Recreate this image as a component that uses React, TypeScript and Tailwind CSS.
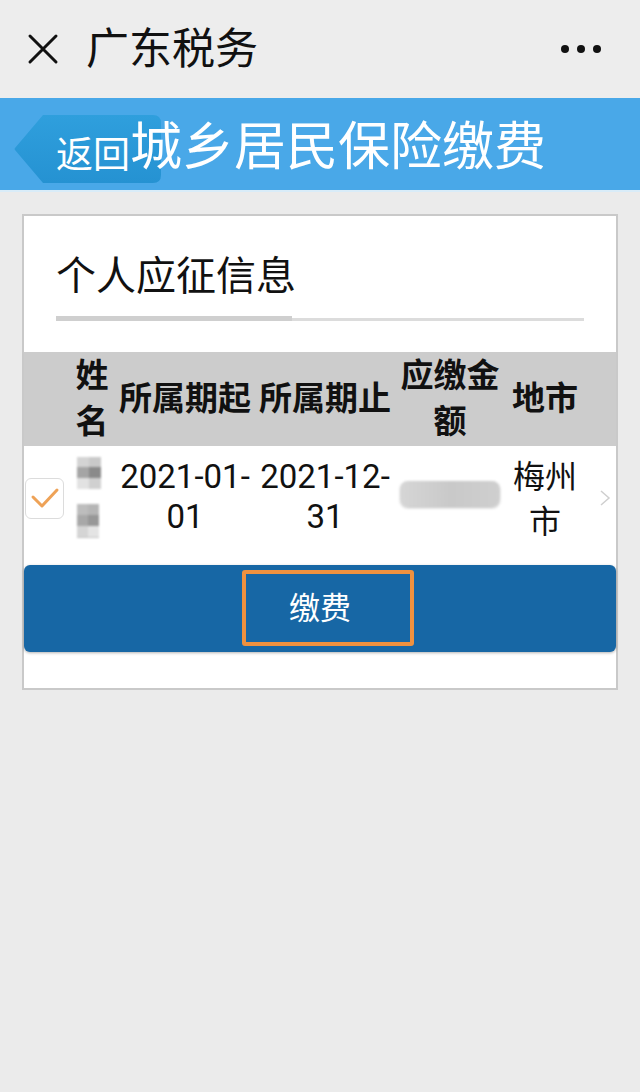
import React from 'react';

const FONT = 'font-["Roboto","Noto_Sans_CJK_SC",sans-serif]';

function CloseIcon() {
  return (
    <svg width="32" height="32" viewBox="0 0 32 32" className="text-[#111]">
      <path d="M3 3 L29 29 M29 3 L3 29" stroke="currentColor" strokeWidth="3" strokeLinecap="round" />
    </svg>
  );
}

function BackShape() {
  return (
    <svg
      width="150"
      height="70"
      viewBox="0 0 150 70"
      className="absolute left-[13px] top-[16px]"
    >
      <defs>
        <linearGradient id="backg" x1="0" y1="0" x2="0" y2="1">
          <stop offset="0" stopColor="#2f9fdd" />
          <stop offset="1" stopColor="#2592d2" />
        </linearGradient>
      </defs>
      <path
        d="M30 1 H140 Q148 1 148 9 V61 Q148 69 140 69 H30 L2 36 Q1 35 2 34 Z"
        fill="url(#backg)"
      />
    </svg>
  );
}

function CheckBox() {
  return (
    <div className="w-[39px] h-[41px] rounded-[6px] border-[1.5px] border-[#dcdcdc] bg-white flex items-center justify-center">
      <svg width="30" height="24" viewBox="0 0 30 24">
        <path
          d="M3 11 L12 20 L27 4"
          fill="none"
          stroke="#eea257"
          strokeWidth="3"
          strokeLinecap="round"
          strokeLinejoin="round"
        />
      </svg>
    </div>
  );
}

// mosaic blur over the name
function BlurredName() {
  return (
    <div className="flex flex-col gap-[15px] items-start">
      <div className="w-[24px] h-[32px] bg-[#dadada] blur-[1px] grid grid-cols-2 grid-rows-3">
        <div className="bg-[#d4d4d4]" />
        <div className="bg-[#c9c9c9]" />
        <div className="bg-[#a5a5a5]" />
        <div className="bg-[#8a8a8a]" />
        <div className="bg-[#e2e2e2]" />
        <div className="bg-[#d0d0d0]" />
      </div>
      <div className="w-[22px] h-[34px] bg-[#c4c4c4] blur-[1px] grid grid-cols-2 grid-rows-3">
        <div className="bg-[#bdbdbd]" />
        <div className="bg-[#b5b5b5]" />
        <div className="bg-[#a8a8a8]" />
        <div className="bg-[#979797]" />
        <div className="bg-[#d5d5d5]" />
        <div className="bg-[#e4e4e4]" />
      </div>
    </div>
  );
}

export default function App() {
  return (
    <div className={`min-h-[1092px] bg-[#ebebeb] ${FONT}`}>
      {/* top bar */}
      <div className="h-[98px] bg-[#ededed] flex items-center pl-[27px] pr-[39px]">
        <CloseIcon />
        <div className="ml-[27px] text-[43px] leading-[48px] text-[#111]">广东税务</div>
        <div className="ml-auto flex gap-[8px]">
          <span className="w-[8px] h-[8px] rounded-full bg-[#111]" />
          <span className="w-[8px] h-[8px] rounded-full bg-[#111]" />
          <span className="w-[8px] h-[8px] rounded-full bg-[#111]" />
        </div>
      </div>

      {/* blue title bar */}
      <div className="relative h-[94px] bg-[#49a8e8] border-b-[2px] border-[#d9ecf8] flex items-center pl-[56px] pt-[8px] text-white">
        <BackShape />
        <span className="relative mt-[16px] text-[37px] leading-[40px]">返回</span>
        <span className="relative text-[52px] leading-[56px]">城乡居民保险缴费</span>
      </div>

      {/* card */}
      <div className="mx-[22px] mt-[22px] border-2 border-[#c9c9c9] bg-white pb-[36px]">
        <div className="px-[32px] pt-[41px]">
          <div className="text-[40px] leading-[40px] text-[#111]">个人应征信息</div>
          <div className="mt-[19px] flex items-end">
            <div className="w-[236px] h-[5px] bg-[#cfcfcf]" />
            <div className="flex-1 h-[3px] bg-[#dcdcdc]" />
          </div>
        </div>

        {/* table header */}
        <div className="mt-[31px] h-[94px] bg-[#cccccc] flex items-center text-[33px] leading-[46px] font-bold text-[#111] text-center">
          <div className="w-[46px]" />
          <div className="w-[44px] flex flex-col">
            <span>姓</span>
            <span>名</span>
          </div>
          <div className="w-[142px]">所属期起</div>
          <div className="w-[138px]">所属期止</div>
          <div className="w-[112px] flex flex-col">
            <span>应缴金</span>
            <span>额</span>
          </div>
          <div className="w-[78px]">地市</div>
        </div>

        {/* data row */}
        <div className="h-[104px] flex items-center text-[#111] text-center">
          <div className="w-[46px] pl-[1px] flex">
            <CheckBox />
          </div>
          <div className="w-[44px] flex justify-start pl-[7px] mt-[-2px]">
            <BlurredName />
          </div>
          <div className="w-[142px] text-[33px] leading-[40px] mt-[-2px]">
            <div>2021-01-</div>
            <div>01</div>
          </div>
          <div className="w-[138px] text-[33px] leading-[40px] mt-[-2px]">
            <div>2021-12-</div>
            <div>31</div>
          </div>
          <div className="w-[112px] flex justify-start pl-[6px] mt-[-8px]">
            <div className="w-[100px] h-[26px] rounded-[8px] bg-gradient-to-r from-[#d6d6d6] via-[#c9c9c9] to-[#cfcfcf] blur-[1px] shadow-[0_1px_2px_rgba(0,0,0,0.25)]" />
          </div>
          <div className="w-[78px] text-[32px] leading-[45px] mt-[4px]">
            <div>梅州</div>
            <div>市</div>
          </div>
          <div className="flex-1 flex justify-center pl-[10px]">
            <svg width="12" height="18" viewBox="0 0 12 18">
              <path d="M2 2 L10 9 L2 16" fill="none" stroke="#cfcfcf" strokeWidth="1.5" />
            </svg>
          </div>
        </div>

        {/* pay button */}
        <div className="relative mt-[15px] h-[87px] rounded-[6px] bg-[#1767a5] shadow-[0_1px_3px_rgba(0,0,0,0.3)] flex items-center justify-center">
          <span className="text-[31px] leading-[40px] text-white">缴费</span>
          <div className="absolute left-[218px] top-[5px] w-[172px] h-[76px] rounded-[3px] border-[4px] border-[#ef913f]" />
        </div>
      </div>
    </div>
  );
}
